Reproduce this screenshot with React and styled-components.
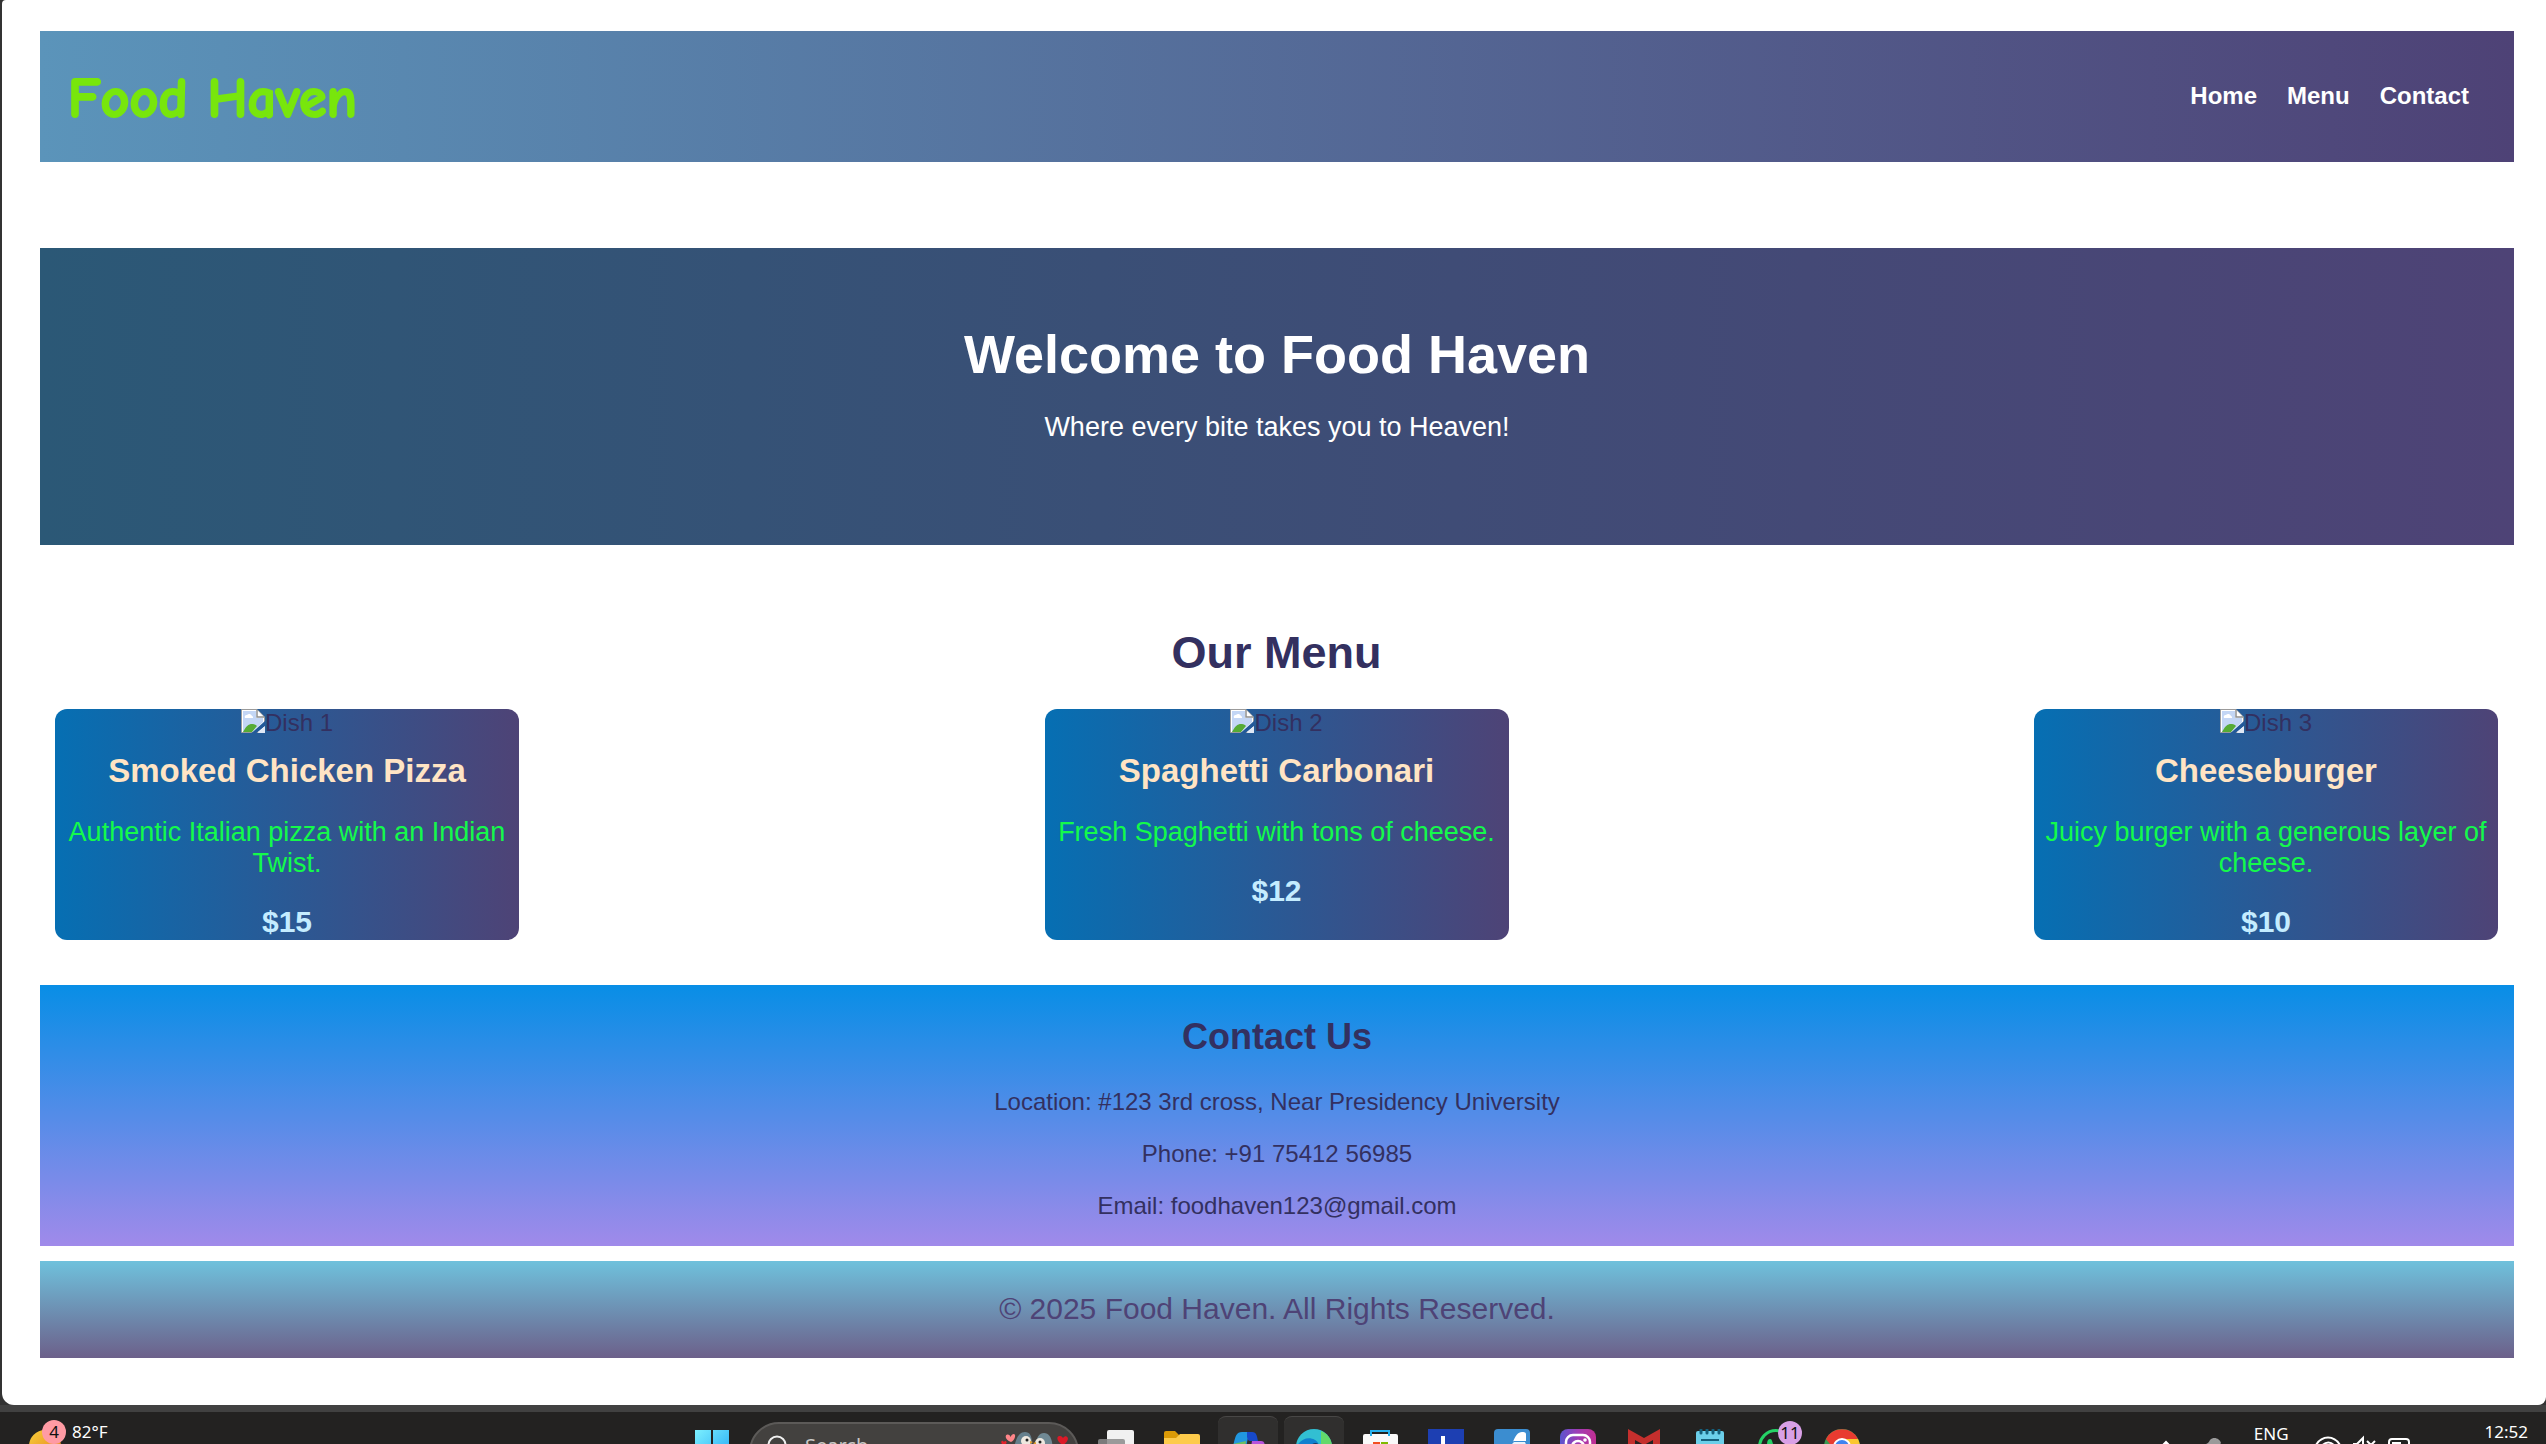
import React from "react";
import styled, { createGlobalStyle } from "styled-components";

const GlobalStyle = createGlobalStyle`
  *, *::before, *::after { box-sizing: border-box; }
  html, body { margin: 0; padding: 0; }
  body {
    background: #333333;
    color: #333060;
    font-family: "Liberation Sans", Arial, sans-serif;
    font-size: 24px;
    line-height: 28px;
    text-align: center;
  }
  h1, h2, h3, p, ul { margin: 0; padding: 0; }
`;

/* ---------- Page ---------- */

const Desktop = styled.div`
  display: flex;
  flex-direction: column;
  min-height: 100vh;
  overflow: hidden;
`;

const Page = styled.div`
  display: flex;
  flex-direction: column;
  margin-left: 2px;
  padding: 31px 32px 47px 38px;
  background: #ffffff;
  border-radius: 4px 0 8px 12px;
`;

const Header = styled.header`
  display: flex;
  align-items: center;
  justify-content: space-between;
  padding: 30px 30px 30px 28px;
  background: linear-gradient(to right, #5b94ba, #4e4276);
`;

const Logo = styled.h1`
  padding-top: 6px;
  color: #78e60c;
  font-family: "Comic Sans MS", "Comic Neue", Lato, sans-serif;
  font-size: 56px;
  font-weight: 700;
  line-height: 65px;
  -webkit-text-stroke: 2px #78e60c;
  stroke-linejoin: round;
`;

const NavList = styled.ul`
  display: flex;
  gap: 30px;
  padding: 0 15px 2px 0;
  list-style: none;
`;

const NavLink = styled.a`
  color: #ffffff;
  font-weight: 700;
  text-decoration: none;
`;

const Hero = styled.section`
  margin-top: 86px;
  padding: 75px 30px 102px;
  color: #ffffff;
  background: linear-gradient(to right, #2b5876, #4e4376);
`;

const HeroTitle = styled.h2`
  margin-bottom: 27px;
  font-size: 54px;
  line-height: 62px;
`;

const HeroText = styled.p`
  font-size: 27px;
  line-height: 31px;
`;

const MenuSection = styled.section`
  margin-top: 82px;
  padding: 0 16px 0 15px;
`;

const MenuTitle = styled.h2`
  margin-bottom: 30px;
  font-size: 45px;
  line-height: 52px;
`;

const CardRow = styled.div`
  display: flex;
  justify-content: space-between;
  gap: 30px;
`;

const Card = styled.article`
  flex: 0 1 464px;
  display: flex;
  flex-direction: column;
  padding-bottom: 1px;
  border-radius: 12px;
  background: linear-gradient(to right, #066fb3, #4e4376);
  overflow: hidden;
`;

const Photo = styled.div`
  display: flex;
  justify-content: center;
  align-items: flex-start;
  margin-bottom: 15px;
`;

const DishName = styled.h3`
  margin-bottom: 27px;
  color: #ffe4c4;
  font-size: 33px;
  line-height: 38px;
`;

const DishText = styled.p`
  margin-bottom: 26px;
  color: #14fa4b;
  font-size: 27px;
  line-height: 31px;
`;

const Price = styled.p`
  color: #c4ecff;
  font-size: 30px;
  font-weight: 700;
  line-height: 34px;
`;

const Contact = styled.section`
  display: flex;
  flex-direction: column;
  gap: 24px;
  margin-top: 45px;
  padding: 31px 30px 26px;
  background: linear-gradient(to bottom, #088ee6, #a08aea);
`;

const ContactTitle = styled.h2`
  margin-bottom: 6px;
  font-size: 36px;
  line-height: 42px;
`;

const Footer = styled.footer`
  margin-top: 15px;
  padding: 30px 30px 32px;
  color: #4e4376;
  font-size: 30px;
  line-height: 35px;
  background: linear-gradient(to bottom, #6fc1dc, #6c608a);
`;

const dishes = [
  { alt: "Dish 1", name: "Smoked Chicken Pizza", text: "Authentic Italian pizza with an Indian Twist.", price: "$15" },
  { alt: "Dish 2", name: "Spaghetti Carbonari", text: "Fresh Spaghetti with tons of cheese.", price: "$12" },
  { alt: "Dish 3", name: "Cheeseburger", text: "Juicy burger with a generous layer of cheese.", price: "$10" },
];

const MissingPhoto = () => (
  <svg width="24" height="24" viewBox="0 0 24 24" aria-hidden="true">
    <path d="M.5 .5H16L23.5 8V23.5H.5Z" fill="#fff" stroke="#9a9a9a" />
    <path d="M2 2H15V9H22V13L11 23H2Z" fill="#c3d6f5" />
    <path d="M4 9a2 2 0 0 1 2-3a3 3 0 0 1 5 1a1.500 1.500 0 0 1 1 2Z" fill="#fff" />
    <path d="M2 23C5 17 8 14.500 12 15c2 .2 3 1 4 2l-5 6Z" fill="#56ab35" />
    <path d="M16 1V8H23" fill="#fff" stroke="#8f8f8f" strokeWidth="1.500" />
    <path d="M24 12L10.500 24H15.500L24 17Z" fill="#22599a" />
    <path d="M24 17L16.500 24H24Z" fill="#dfe8f5" />
  </svg>
);

/* ---------- Taskbar ---------- */

const Taskbar = styled.footer`
  display: grid;
  grid-template-columns: 1fr auto 1fr;
  align-items: start;
  height: 39px;
  margin-top: auto;
  padding: 0 18px 0 26px;
  border-top: 7px solid #414141;
  background: #232221;
  color: #ffffff;
  font-family: "Noto Sans", "Open Sans", sans-serif;
  font-size: 17px;
  line-height: 24px;
  overflow: hidden;
`;

const Weather = styled.div`
  display: flex;
  gap: 6px;
  padding-top: 8px;
`;

const WeatherIcon = styled.span`
  position: relative;
  width: 40px;
  height: 46px;
`;

const Badge = styled.span`
  position: absolute;
  top: ${(p) => p.$top};
  right: ${(p) => p.$right};
  width: 24px;
  height: 24px;
  border-radius: 50%;
  background: ${(p) => p.$color};
  color: #111111;
  text-align: center;
`;

const Apps = styled.div`
  display: flex;
  gap: 6px;
  padding-top: 4px;
`;

const AppButton = styled.button`
  position: relative;
  display: flex;
  justify-content: center;
  width: 60px;
  height: 60px;
  padding: 12px 0 0;
  border: 0;
  border-top: 1px solid ${(p) => (p.$active ? "#484746" : "transparent")};
  border-radius: 8px;
  background: ${(p) => (p.$active ? "#302f2e" : "transparent")};
  font: inherit;
`;

const SearchBox = styled.label`
  display: flex;
  gap: 16px;
  width: 330px;
  height: 60px;
  margin: 6px 1px 0;
  padding: 8px 8px 0 16px;
  border: 2px solid #5c5a58;
  border-radius: 30px;
  background: #43413f;
`;

const SearchInput = styled.input`
  flex: 1;
  min-width: 0;
  height: 28px;
  padding: 0;
  border: 0;
  background: transparent;
  color: #ffffff;
  font: inherit;
  font-size: 20px;
  line-height: 28px;
  &::placeholder { color: #c9c7c5; opacity: 1; }
`;

const Tray = styled.div`
  display: flex;
  justify-content: flex-end;
  align-items: flex-start;
  padding-top: 8px;
`;

const Language = styled.span`
  margin: 2px 26px 0 32px;
`;

const Clock = styled.time`
  margin-left: 74px;
`;

const Icon = ({ children, w = 36 }) => (
  <svg width={w} height="36" viewBox={`0 0 ${w} 36`} aria-hidden="true">{children}</svg>
);

const apps = [
  {
    name: "Task view",
    art: (
      <>
        <rect x="9" y="1" width="27" height="27" rx="2" fill="#f1f1f1" />
        <rect x="0" y="10" width="27" height="26" rx="2" fill="#8b8b8b" opacity=".85" />
      </>
    ),
  },
  {
    name: "File Explorer",
    art: (
      <>
        <path d="M0 4a2 2 0 0 1 2-2H11l4 4V12H0Z" fill="#dc9b06" />
        <path d="M0 9H12l4-4H34a2 2 0 0 1 2 2V34H0Z" fill="#fdcb4b" />
      </>
    ),
  },
  {
    name: "Copilot",
    active: true,
    art: (
      <>
        <path d="M2 22C5 10 5 3 12 3H23C17 3 18 14 14 26H1Z" fill="#2197df" />
        <path d="M3 15L16 12L14 26H1Z" fill="#6cbe62" />
        <path d="M17 3H22c5 0 5 5 6 9H22c-3 0-4 0-5-4Z" fill="#1749c9" />
        <path d="M22 12H31c5 0 4 6 2 12H20Z" fill="#b653dc" />
      </>
    ),
  },
  {
    name: "Edge",
    active: true,
    art: (
      <>
        <path d="M0 18a18 18 0 0 1 36 0v5H18Z" fill="#32bfd2" />
        <path d="M25 2c8 3 12 11 11 19H25Z" fill="#63d96b" />
        <path d="M0 19C5 6 20 7 23 16l-7 9H0Z" fill="#1180cf" />
        <path d="M14 18c2-5 8-5 10-1v8H14Z" fill="#163b5f" />
      </>
    ),
  },
  {
    name: "Store",
    art: (
      <>
        <rect x="1" y="5" width="35" height="30" rx="2" fill="#fafafa" />
        <path d="M9 7V2H27V7" fill="none" stroke="#27b2ef" strokeWidth="2" />
        <rect x="11" y="13" width="7" height="7" fill="#f25022" />
        <rect x="19" y="13" width="7" height="7" fill="#7fba00" />
      </>
    ),
  },
  {
    name: "Lenovo",
    art: (
      <>
        <rect width="36" height="36" fill="#1d3fb2" />
        <path d="M15 7V28H26" fill="none" stroke="#fff" strokeWidth="4" />
      </>
    ),
  },
  {
    name: "Bird",
    art: (
      <>
        <rect width="36" height="36" rx="4" fill="#3b8dd0" />
        <path d="M19 13c2-6 5-10 9-10c4 0 4 1 4 3V12H19Z" fill="#fff" />
        <path d="M15 18L20 13H31L33 18Z" fill="#e9f3fb" />
      </>
    ),
  },
  {
    name: "Instagram",
    art: (
      <>
        <defs>
          <linearGradient id="insta" x1="0" y1="0" x2="1" y2="0">
            <stop offset="0" stopColor="#5a55cf" />
            <stop offset=".5" stopColor="#a03bb5" />
            <stop offset="1" stopColor="#c22f92" />
          </linearGradient>
        </defs>
        <rect width="36" height="36" rx="8" fill="url(#insta)" />
        <rect x="6" y="6" width="24" height="24" rx="7" fill="none" stroke="#fff" strokeWidth="2.500" />
        <circle cx="18" cy="18" r="6" fill="none" stroke="#fff" strokeWidth="2.500" />
        <circle cx="25" cy="11" r="1.800" fill="#fff" />
      </>
    ),
  },
  {
    name: "McAfee",
    art: <path d="M2 0L18 9L34 0V34H27V11L18 16L9 11V34H2Z" fill="#c52f2d" />,
  },
  {
    name: "Notepad",
    art: (
      <>
        <rect x="4" y="2" width="28" height="34" rx="2" fill="#6bcfea" />
        <path d="M9 1V4M15 1V4M21 1V4M27 1V4" stroke="#14607d" strokeWidth="3" strokeLinecap="round" />
        <path d="M9 11H27" stroke="#14607d" strokeWidth="2" />
      </>
    ),
  },
  {
    name: "WhatsApp",
    badge: "11",
    art: (
      <>
        <circle cx="18" cy="18" r="16.500" fill="none" stroke="#25d366" strokeWidth="3" />
        <path d="M9 16c0-4 1-6 3-6c2 0 2 2 3 5v4H10Z" fill="#25d366" />
      </>
    ),
  },
  {
    name: "Chrome",
    art: (
      <>
        <circle cx="18" cy="18" r="18" fill="#3b9b52" />
        <path d="M2 10a18 18 0 0 1 32 0H18L9 19Z" fill="#e83b30" />
        <path d="M22 10H34a18 18 0 0 1 2 10H24Z" fill="#fbc72e" />
        <circle cx="18" cy="18" r="9" fill="#fff" />
        <circle cx="18" cy="18" r="7" fill="#3f83f0" />
      </>
    ),
  },
];

const SearchArt = () => (
  <svg width="68" height="34" viewBox="0 0 68 34" aria-hidden="true">
    <path d="M10 10C3 7 4 2 7 2.500C9 3 9 4 9.500 5C11 1 15 1 14 5C13 8 12 9 10 10Z" fill="#ff8589" />
    <path d="M3 13C-1 12 0 8 2 9L3 10C4 8 6 9 5.500 11C5 12 4 13 3 13Z" fill="#e3202a" />
    <path d="M12 34C12 14 15 0 24 0C32 0 32 10 30 34Z" fill="#66808d" />
    <path d="M34 34C34 14 34 1 43 1C52 1 53 16 51 34Z" fill="#708994" />
    <circle cx="25" cy="9" r="5" fill="#eee8df" />
    <circle cx="39" cy="11" r="5" fill="#eee8df" />
    <circle cx="26" cy="8" r="1.500" fill="#222" />
    <circle cx="39" cy="10" r="1.500" fill="#222" />
    <path d="M29 9l3 1l-3 2ZM35 10l-3 1l3 2Z" fill="#e7a32f" />
    <path d="M62 13C54 9 56 3 59 4C61 4 61 5 62 6C64 3 67 4 67 7C66 10 64 12 62 13Z" fill="#dc1927" />
  </svg>
);

export default function App() {
  return (
    <>
      <GlobalStyle />
      <Desktop>
        <Page>
          <Header>
            <Logo>Food Haven</Logo>
            <nav>
              <NavList>
                {["Home", "Menu", "Contact"].map((item) => (
                  <li key={item}>
                    <NavLink href={`#${item.toLowerCase()}`}>{item}</NavLink>
                  </li>
                ))}
              </NavList>
            </nav>
          </Header>

          <Hero id="home">
            <HeroTitle>Welcome to Food Haven</HeroTitle>
            <HeroText>Where every bite takes you to Heaven!</HeroText>
          </Hero>

          <MenuSection id="menu">
            <MenuTitle>Our Menu</MenuTitle>
            <CardRow>
              {dishes.map((dish) => (
                <Card key={dish.name}>
                  <Photo>
                    <MissingPhoto />
                    {dish.alt}
                  </Photo>
                  <DishName>{dish.name}</DishName>
                  <DishText>{dish.text}</DishText>
                  <Price>{dish.price}</Price>
                </Card>
              ))}
            </CardRow>
          </MenuSection>

          <Contact id="contact">
            <ContactTitle>Contact Us</ContactTitle>
            <p>Location: #123 3rd cross, Near Presidency University</p>
            <p>Phone: +91 75412 56985</p>
            <p>Email: foodhaven123@gmail.com</p>
          </Contact>

          <Footer>© 2025 Food Haven. All Rights Reserved.</Footer>
        </Page>

        <Taskbar>
          <Weather>
            <WeatherIcon>
              <svg width="39" height="46" viewBox="0 0 39 46" aria-hidden="true">
                <defs>
                  <linearGradient id="sun" x1="0" y1="0" x2="1" y2="1">
                    <stop offset="0" stopColor="#f5cf3a" />
                    <stop offset="1" stopColor="#e87a1c" />
                  </linearGradient>
                </defs>
                <circle cx="18" cy="26" r="16" fill="url(#sun)" />
              </svg>
              <Badge $top="0" $right="0" $color="#ff9ba4">4</Badge>
            </WeatherIcon>
            <span>82°F</span>
          </Weather>

          <Apps>
            <AppButton aria-label="Start">
              <Icon>
                <defs>
                  <linearGradient id="win" x1="0" y1="0" x2="1" y2="1">
                    <stop offset="0" stopColor="#7cf0ff" />
                    <stop offset="1" stopColor="#1fa4f5" />
                  </linearGradient>
                </defs>
                <path d="M1 1H17V17H1ZM19 1H35V17H19ZM1 19H17V35H1ZM19 19H35V35H19Z" fill="url(#win)" />
              </Icon>
            </AppButton>
            <SearchBox>
              <svg width="22" height="30" viewBox="0 0 22 30" aria-hidden="true">
                <circle cx="10" cy="13" r="8.500" fill="none" stroke="#f0f0f0" strokeWidth="2" />
              </svg>
              <SearchInput type="search" placeholder="Search" aria-label="Search" />
              <SearchArt />
            </SearchBox>
            {apps.map((app) => (
              <AppButton key={app.name} aria-label={app.name} $active={app.active}>
                <Icon>{app.art}</Icon>
                {app.badge && <Badge $top="4px" $right="4px" $color="#d9a0e6">{app.badge}</Badge>}
              </AppButton>
            ))}
          </Apps>

          <Tray>
            <svg width="64" height="30" viewBox="0 0 64 30" aria-hidden="true">
              <path d="M2 28L8 22L14 28" fill="none" stroke="#fff" strokeWidth="2" />
              <path d="M44 28C46 23 50 25 52 20C56 16 62 19 63 23L58 30H44Z" fill="#9a9a9a" />
            </svg>
            <Language>ENG</Language>
            <svg width="96" height="30" viewBox="0 0 96 30" fill="none" stroke="#fff" strokeWidth="2" aria-hidden="true">
              <path d="M1 25C7 15 19 15 25 25M6 27C10 21 17 21 20 27" />
              <path d="M38 24H42L48 18V30M52 21L60 29M60 21L52 29" />
              <rect x="74" y="19" width="20" height="14" rx="3" />
              <path d="M77 22H86V30H77Z" fill="#fff" stroke="none" />
            </svg>
            <Clock>12:52</Clock>
          </Tray>
        </Taskbar>
      </Desktop>
    </>
  );
}
